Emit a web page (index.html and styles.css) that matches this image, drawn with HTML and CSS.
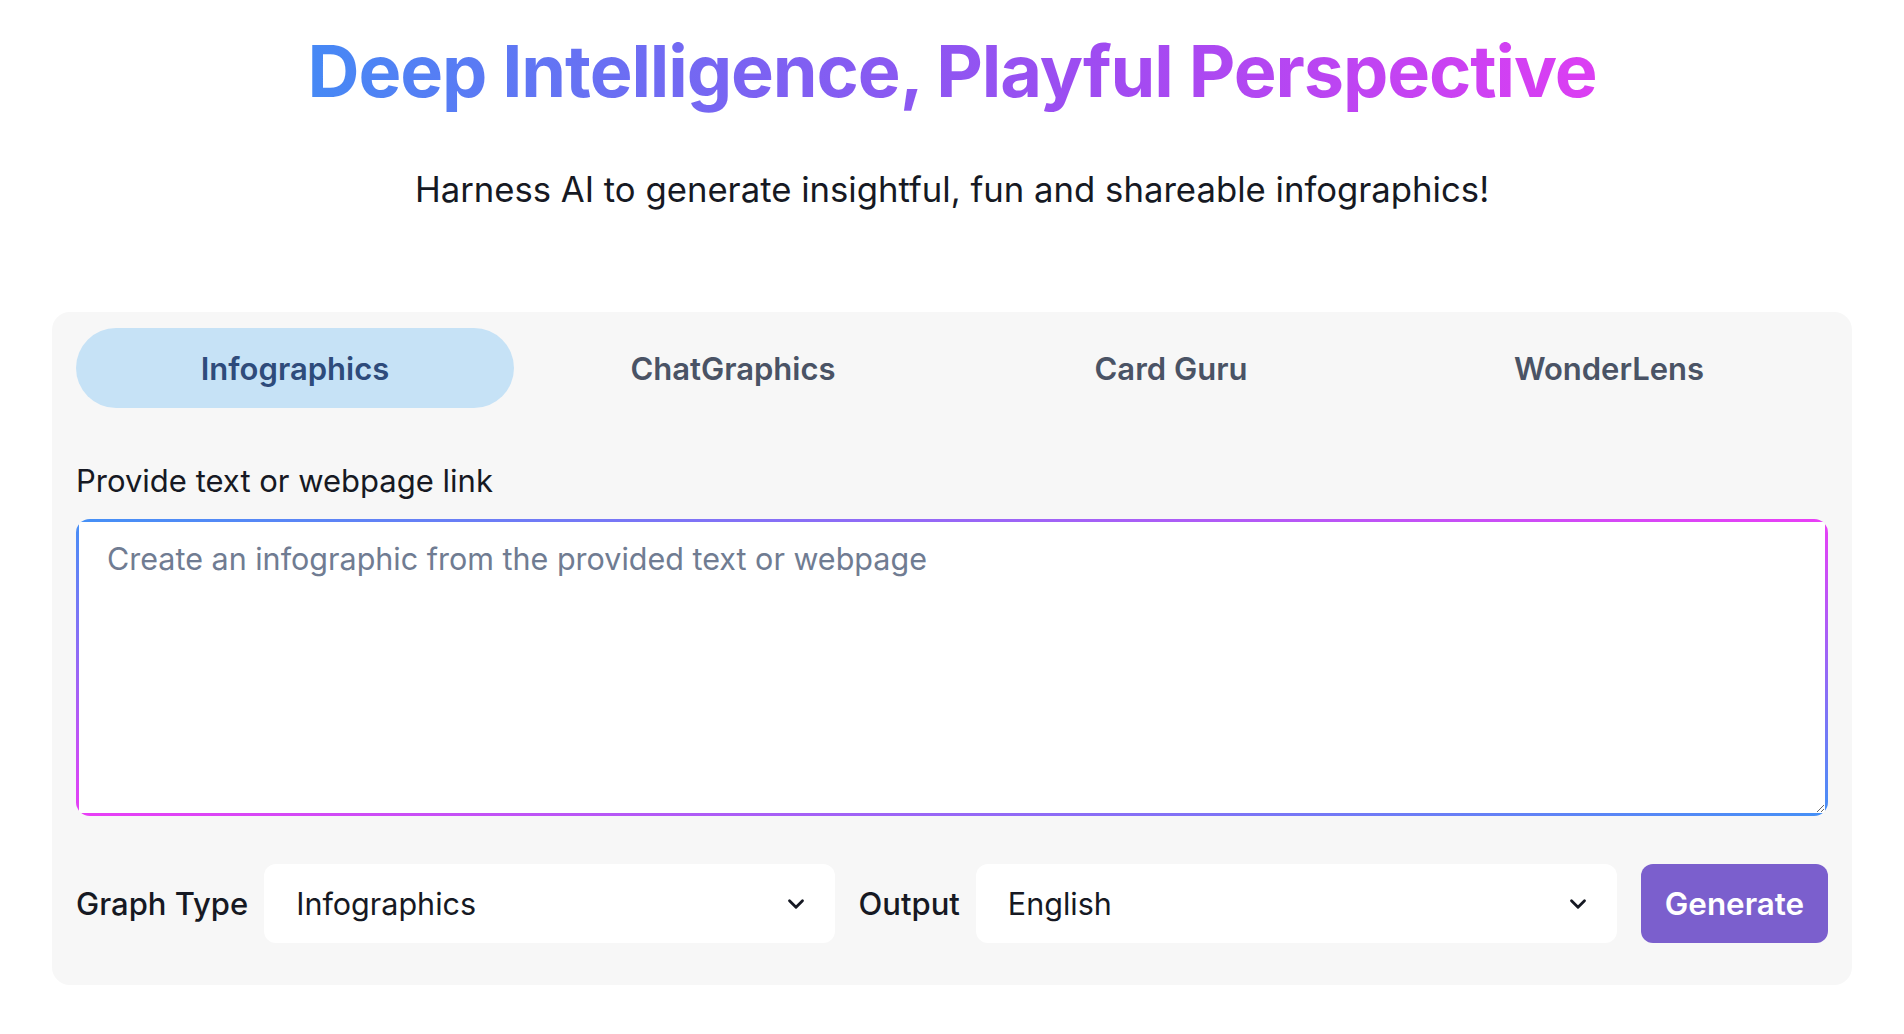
FILE: index.html
```html
<!DOCTYPE html>
<html lang="en">
<head>
<meta charset="utf-8">
<title>Deep Intelligence, Playful Perspective</title>
<link rel="stylesheet" href="styles.css">
</head>
<body>
<main class="page">
  <header class="hero">
    <h1 class="hero-title">Deep Intelligence, Playful Perspective</h1>
    <p class="hero-sub">Harness AI to generate insightful, fun and shareable infographics!</p>
  </header>

  <section class="card">
    <nav class="tabs">
      <button class="tab tab-active">Infographics</button>
      <button class="tab">ChatGraphics</button>
      <button class="tab">Card Guru</button>
      <button class="tab">WonderLens</button>
    </nav>

    <label class="field-label" for="src">Provide text or webpage link</label>
    <div class="gradient-frame">
      <textarea id="src" class="input-area" placeholder="Create an infographic from the provided text or webpage"></textarea>
    </div>

    <div class="controls">
      <div class="control-group">
        <span class="control-label">Graph Type</span>
        <div class="select">
          <span class="select-value">Infographics</span>
          <svg class="chevron" viewBox="0 0 24 24" width="26" height="26"><path d="M6 9l6 6 6-6" fill="none" stroke="currentColor" stroke-width="2.6" stroke-linecap="round" stroke-linejoin="round"/></svg>
        </div>
      </div>
      <div class="control-group">
        <span class="control-label">Output</span>
        <div class="select">
          <span class="select-value">English</span>
          <svg class="chevron" viewBox="0 0 24 24" width="26" height="26"><path d="M6 9l6 6 6-6" fill="none" stroke="currentColor" stroke-width="2.6" stroke-linecap="round" stroke-linejoin="round"/></svg>
        </div>
      </div>
      <button class="generate">Generate</button>
    </div>
  </section>
</main>
</body>
</html>
```

FILE: styles.css
```css
* { box-sizing: border-box; }

html, body {
  margin: 0;
  padding: 0;
  background: #ffffff;
  font-family: Inter, "Noto Sans", "Liberation Sans", sans-serif;
  color: #1c1f2a;
}

.page {
  padding: 28px 52px 0;
}

.hero {
  display: flex;
  flex-direction: column;
  align-items: center;
}

.hero-title {
  margin: 0;
  font-size: 72px;
  line-height: 86px;
  font-weight: 700;
  letter-spacing: -1.1px;
  background: linear-gradient(90deg, #4689f5 0%, #7c62f2 35%, #a04bf1 62%, #dc3ef3 100%);
  -webkit-background-clip: text;
  background-clip: text;
  color: transparent;
}

.hero-sub {
  margin: 48px 0 0;
  font-size: 34.7px;
  line-height: 54px;
  font-weight: 400;
  color: #161923;
}

.card {
  margin-top: 96px;
  background: #f7f7f7;
  border-radius: 18px;
  padding: 16px 24px 42px;
}

.tabs {
  display: grid;
  grid-template-columns: repeat(4, 1fr);
  margin-bottom: 50px;
}

.tab {
  height: 80px;
  border: 0;
  border-radius: 40px;
  background: transparent;
  font-family: inherit;
  font-size: 31px;
  font-weight: 600;
  color: #4a5365;
}

.tab-active {
  background: #c6e2f6;
  color: #2e4b7b;
}

.field-label {
  display: block;
  font-size: 31px;
  line-height: 45px;
  color: #161923;
  margin-bottom: 16px;
}

.gradient-frame {
  padding: 3px;
  border-radius: 14px;
  background:
    linear-gradient(90deg, #4590f6, #e93ef6) top / 100% 3px no-repeat,
    linear-gradient(90deg, #e93ef6, #4590f6) bottom / 100% 3px no-repeat,
    linear-gradient(180deg, #4590f6, #e93ef6) left / 3px 100% no-repeat,
    linear-gradient(180deg, #e93ef6, #4590f6) right / 3px 100% no-repeat,
    #ffffff;
}

.input-area {
  display: block;
  width: 100%;
  height: 291px;
  border: 0;
  border-radius: 11px;
  outline: none;
  resize: vertical;
  padding: 14px 28px;
  font-family: inherit;
  font-size: 30.5px;
  line-height: 45px;
  color: #161923;
  background: #ffffff;
}

.input-area::placeholder {
  color: #707c92;
}

.controls {
  display: flex;
  align-items: center;
  gap: 24px;
  margin-top: 48px;
}

.control-group {
  flex: 1;
  display: flex;
  align-items: center;
  gap: 16px;
}

.control-label {
  font-size: 31px;
  font-weight: 500;
  color: #161923;
  white-space: nowrap;
}

.select {
  flex: 1;
  height: 79px;
  background: #ffffff;
  border-radius: 12px;
  display: flex;
  align-items: center;
  justify-content: space-between;
  padding: 0 26px 0 32px;
}

.select-value {
  font-size: 30.5px;
  color: #161923;
}

.chevron {
  color: #161923;
}

.generate {
  height: 79px;
  width: 187px;
  border: 0;
  border-radius: 12px;
  background: #7b5fcd;
  color: #ffffff;
  font-family: inherit;
  font-size: 31.4px;
  font-weight: 600;
}
```
